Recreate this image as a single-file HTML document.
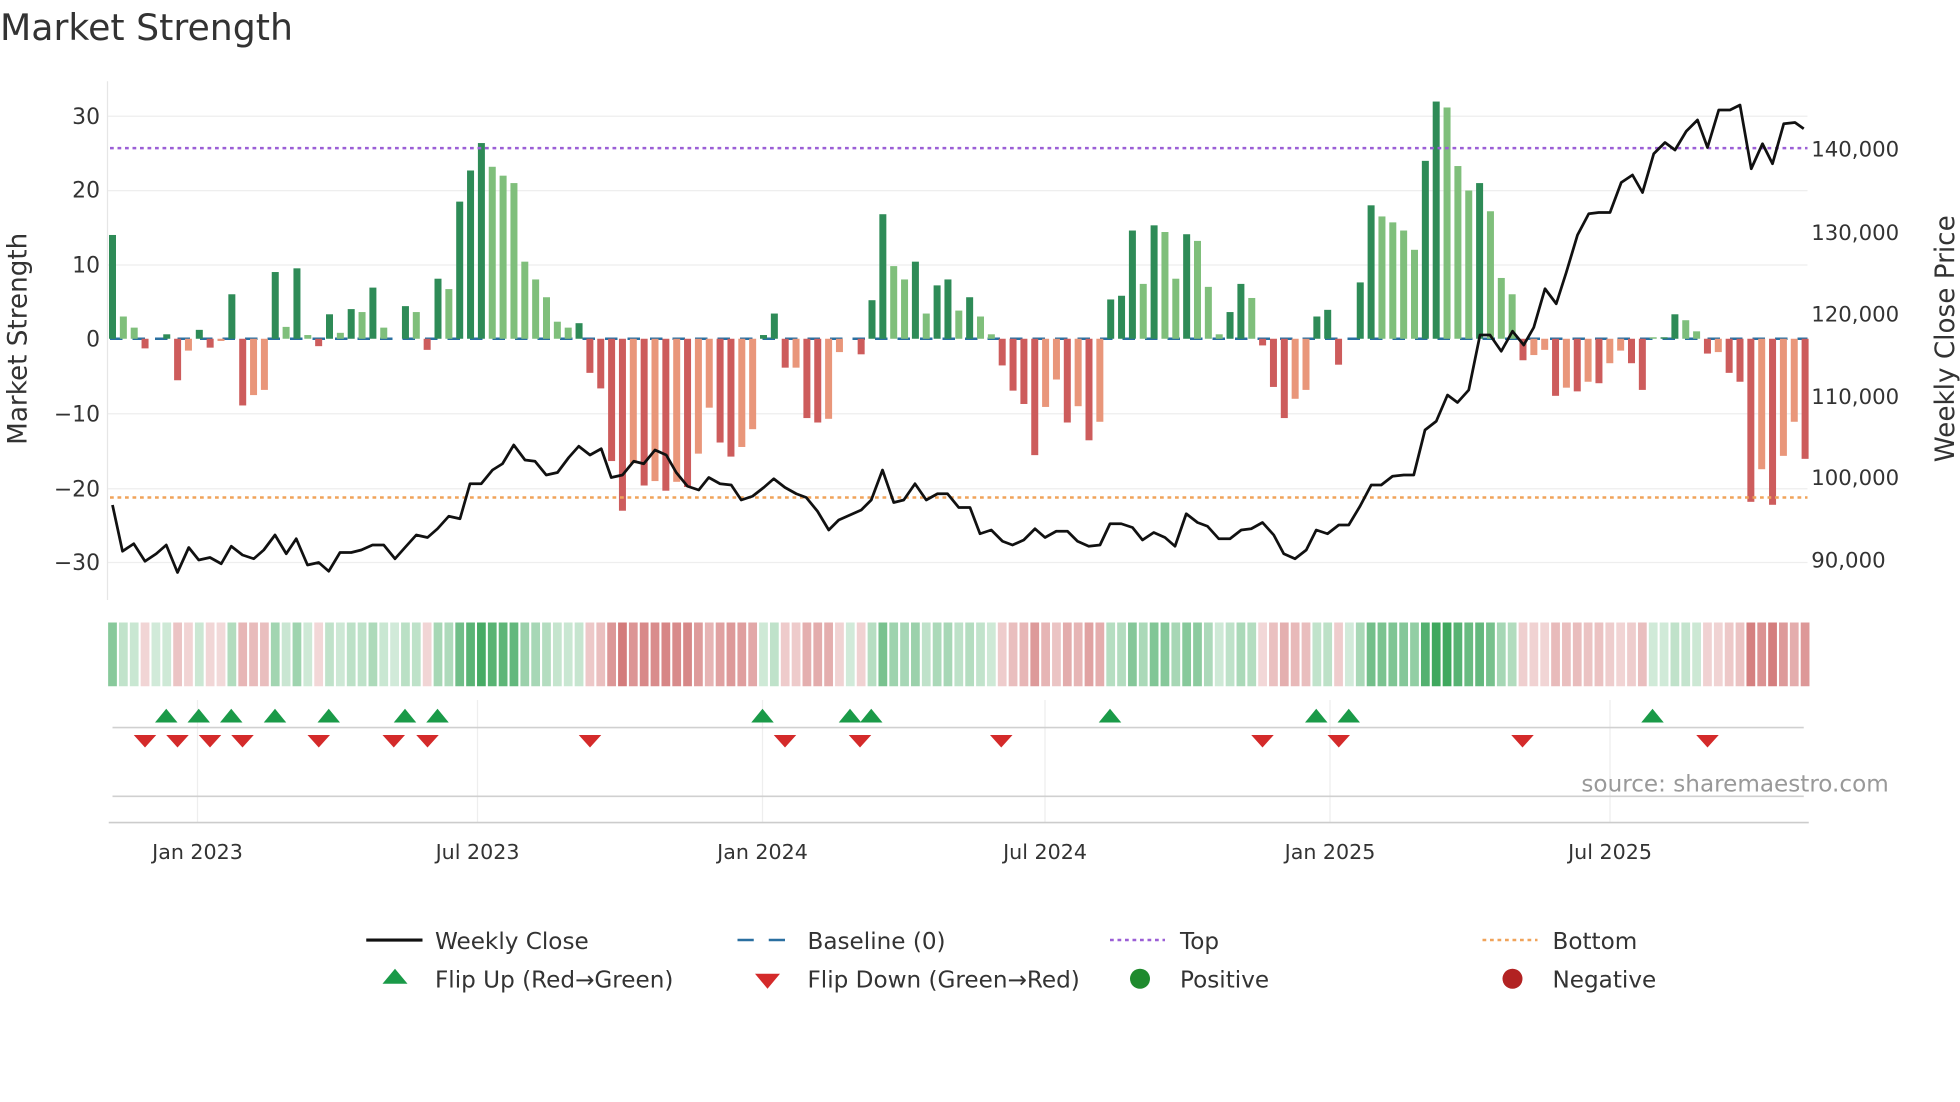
<!DOCTYPE html>
<html><head><meta charset="utf-8"><style>
html,body{margin:0;padding:0;background:#fff;width:1960px;height:1102px;overflow:hidden}
svg{display:block}
text{font-family:"DejaVu Sans","Liberation Sans",sans-serif;fill:#333}
</style></head><body>
<svg id="s" width="1960" height="1102" viewBox="0 0 1568 881.6" xmlns="http://www.w3.org/2000/svg">
<text x="0" y="32" font-size="29">Market Strength</text>
<g id="grid" stroke="#eeeeee" stroke-width="1">
<line x1="86" x2="1446" y1="93" y2="93"/><line x1="86" x2="1446" y1="152.5" y2="152.5"/>
<line x1="86" x2="1446" y1="212" y2="212"/><line x1="86" x2="1446" y1="331" y2="331"/>
<line x1="86" x2="1446" y1="391" y2="391"/><line x1="86" x2="1446" y1="450" y2="450"/>
<line x1="158" x2="158" y1="560" y2="658"/><line x1="382" x2="382" y1="560" y2="658"/>
<line x1="610" x2="610" y1="560" y2="658"/><line x1="836" x2="836" y1="560" y2="658"/>
<line x1="1064" x2="1064" y1="560" y2="658"/><line x1="1288" x2="1288" y1="560" y2="658"/>
</g>
<line x1="86" x2="86" y1="65" y2="480" stroke="#e6e6e6"/>
<g font-size="17.5" text-anchor="end">
<text x="80" y="99">30</text><text x="80" y="158">20</text><text x="80" y="218">10</text>
<text x="80" y="277">0</text><text x="80" y="337">−10</text><text x="80" y="397">−20</text><text x="80" y="456">−30</text>
</g>
<g font-size="17">
<text x="1449" y="125">140,000</text><text x="1449" y="192">130,000</text><text x="1449" y="257">120,000</text>
<text x="1449" y="323">110,000</text><text x="1449" y="388">100,000</text><text x="1449" y="454">90,000</text>
</g>
<text transform="translate(21,271) rotate(-90)" font-size="21" text-anchor="middle">Market Strength</text>
<text transform="translate(1563,271) rotate(-90)" font-size="21" text-anchor="middle">Weekly Close Price</text>
<line x1="88" x2="1446" y1="271" y2="271" stroke="#2a6fa0" stroke-width="2" stroke-dasharray="10 8"/>
<g id="bars"></g>
<line x1="88" x2="1446" y1="118.5" y2="118.5" stroke="#9b5fd6" stroke-width="2" stroke-dasharray="3 3"/>
<line x1="88" x2="1446" y1="398" y2="398" stroke="#f0a35a" stroke-width="2" stroke-dasharray="3 3"/>
<polyline id="price" fill="none" stroke="#111" stroke-width="2.2" stroke-linejoin="round"/>
<g id="heat"></g>
<line x1="90" x2="1443" y1="582" y2="582" stroke="#d0d0d0" stroke-width="1.3"/>
<g id="flips"></g>
<line x1="90" x2="1443" y1="637" y2="637" stroke="#d0d0d0" stroke-width="1.3"/>
<line x1="87" x2="1447" y1="658" y2="658" stroke="#ccc" stroke-width="1.3"/>
<text x="1511" y="633" font-size="18.5" text-anchor="end" style="fill:#999">source: sharemaestro.com</text>
<g font-size="16.5" text-anchor="middle">
<text x="158" y="687">Jan 2023</text><text x="382" y="687">Jul 2023</text><text x="610" y="687">Jan 2024</text>
<text x="836" y="687">Jul 2024</text><text x="1064" y="687">Jan 2025</text><text x="1288" y="687">Jul 2025</text>
</g>
<g font-size="18.5">
<line x1="293" x2="338" y1="752" y2="752" stroke="#111" stroke-width="2.5"/><text x="348" y="759">Weekly Close</text>
<line x1="590" x2="634" y1="752" y2="752" stroke="#2a6fa0" stroke-width="2" stroke-dasharray="13 12"/><text x="646" y="759">Baseline (0)</text>
<line x1="888" x2="932" y1="752" y2="752" stroke="#9b5fd6" stroke-width="2" stroke-dasharray="3 3"/><text x="944" y="759">Top</text>
<line x1="1186" x2="1230" y1="752" y2="752" stroke="#f0a35a" stroke-width="2" stroke-dasharray="3 3"/><text x="1242" y="759">Bottom</text>
<polygon points="306,787 326,787 316,775" fill="#1a9a48"/><text x="348" y="790">Flip Up (Red→Green)</text>
<polygon points="604,779 624,779 614,791" fill="#d42a2a"/><text x="646" y="790">Flip Down (Green→Red)</text>
<circle cx="912" cy="783" r="8" fill="#1f8a2e"/><text x="944" y="790">Positive</text>
<circle cx="1210" cy="783" r="8" fill="#b22222"/><text x="1242" y="790">Negative</text>
</g>
</svg>
<script>
var d="14D,3L,1.5L,-1.3D,0,0.6D,-5.6D,-1.6L,1.2D,-1.2D,-0.3L,6D,-9D,-7.6L,-6.9L,9D,1.6L,9.5D,0.5L,-1D,3.3D,0.8L,4D,3.6L,6.9D,1.5L,0,4.4D,3.6L,-1.5D,8.1D,6.7L,18.5D,22.7D,26.4D,23.2L,22L,21L,10.4L,8L,5.6L,2.3L,1.5L,2.1D,-4.6D,-6.7D,-16.5D,-23.2D,-16.8L,-19.8D,-19.2L,-20.5D,-19.3L,-20D,-15.5L,-9.3L,-14D,-15.9D,-14.6L,-12.2L,0.5D,3.4D,-3.9D,-3.9L,-10.7D,-11.3D,-10.8L,-1.8L,0,-2.1D,5.2D,16.8D,9.8L,8L,10.4D,3.4L,7.2D,8D,3.8L,5.6D,3L,0.6L,-3.6D,-7D,-8.8D,-15.7D,-9.2L,-5.5L,-11.3D,-9.1L,-13.7D,-11.2L,5.3D,5.8D,14.6D,7.4L,15.3D,14.4L,8.1L,14.1D,13.2L,7L,0.6L,3.6D,7.4D,5.5L,-0.9D,-6.5D,-10.7D,-8.1L,-6.9L,3D,3.9D,-3.5D,0,7.6D,18D,16.5L,15.7L,14.6L,12L,24D,32D,31.2L,23.3L,20L,21D,17.2L,8.2L,6L,-2.9D,-2.2L,-1.5L,-7.7D,-6.6L,-7.1D,-5.8L,-6D,-3.3L,-1.6L,-3.3D,-6.9D,0.2L,0.2D,3.3D,2.5L,1L,-2D,-1.8L,-4.6D,-5.8D,-22D,-17.6L,-22.4D,-15.8L,-11.2L,-16.2D".split(",");
var ns="http://www.w3.org/2000/svg";
function el(t,a,p){var e=document.createElementNS(ns,t);for(var k in a)e.setAttribute(k,a[k]);document.getElementById(p).appendChild(e);}
var sp=8.68,y0=271,k=5.93;
d.forEach(function(s,i){
 var v=parseFloat(s),sh=s.slice(-1),x=90+sp*i;
 if(v!==0){var c=v>0?(sh=="D"?"#2e8b57":"#7fbf7b"):(sh=="D"?"#cd5c5c":"#e9967a");
 var h=Math.abs(v)*k;el("rect",{x:x-2.8,y:v>0?y0-h:y0,width:5.6,height:h,fill:c},"bars");}
 var t=Math.min(1,Math.abs(v)/28)*0.7+0.22;var b=v>=0?[46,160,80]:[200,90,90];
 var col="rgb("+b.map(function(q){return Math.round(255*(1-t)+q*t)}).join(",")+")";
 el("rect",{x:x-3.5,y:498,width:7,height:51,fill:col},"heat");
});
var p="90,404 98,441 107,435 116,449 125,443 133,436 142,458 151,438 159,448 168,446 177,451 185,437 194,444 203,447 211,440 220,428 229,443 237,431 246,452 255,450 263,457 272,442 281,442 289,440 298,436 307,436 316,447 324,438 333,428 342,430 350,423 359,413 368,415 376,387 385,387 394,376 402,371 411,356 420,368 428,369 437,380 446,378 455,366 463,357 472,364 481,359 489,382 498,380 507,369 515,371 524,360 533,364 541,378 550,389 559,392 567,382 576,387 585,388 593,400 602,397 611,390 619,383 628,390 637,395 645,398 654,409 663,424 671,416 680,412 689,408 697,400 706,376 715,402 723,400 732,387 741,400 750,395 758,395 767,406 776,406 784,427 793,424 802,433 810,436 819,432 828,423 836,430 845,425 854,425 862,433 871,437 880,436 888,419 897,419 906,422 914,432 923,426 932,430 940,437 949,411 958,418 966,421 975,431 984,431 993,424 1001,423 1010,418 1019,428 1027,443 1036,447 1045,440 1053,424 1062,427 1071,420 1079,420 1088,405 1097,388 1105,388 1114,381 1123,380 1131,380 1140,344 1149,337 1158,316 1166,322 1175,312 1184,268 1192,268 1201,281 1210,265 1219,276 1227,262 1236,231 1245,243 1253,218 1262,188 1271,171 1279,170 1288,170 1297,146 1306,140 1314,154 1323,123 1332,114 1340,120 1349,105 1358,96 1366,118 1375,88 1384,88 1392,84 1401,135 1410,115 1418,131 1427,99 1436,98 1443,103";
document.getElementById("price").setAttribute("points",p);
[133,159,185,220,263,324,350,610,680,697,888,1053,1079,1322].forEach(function(x){el("polygon",{points:(x-9)+",578 "+(x+9)+",578 "+x+",567",fill:"#1a9a48"},"flips");});
[116,142,168,194,255,315,342,472,628,688,801,1010,1071,1218,1366].forEach(function(x){el("polygon",{points:(x-9)+",588 "+(x+9)+",588 "+x+",598",fill:"#d42a2a"},"flips");});
</script>
</body></html>
